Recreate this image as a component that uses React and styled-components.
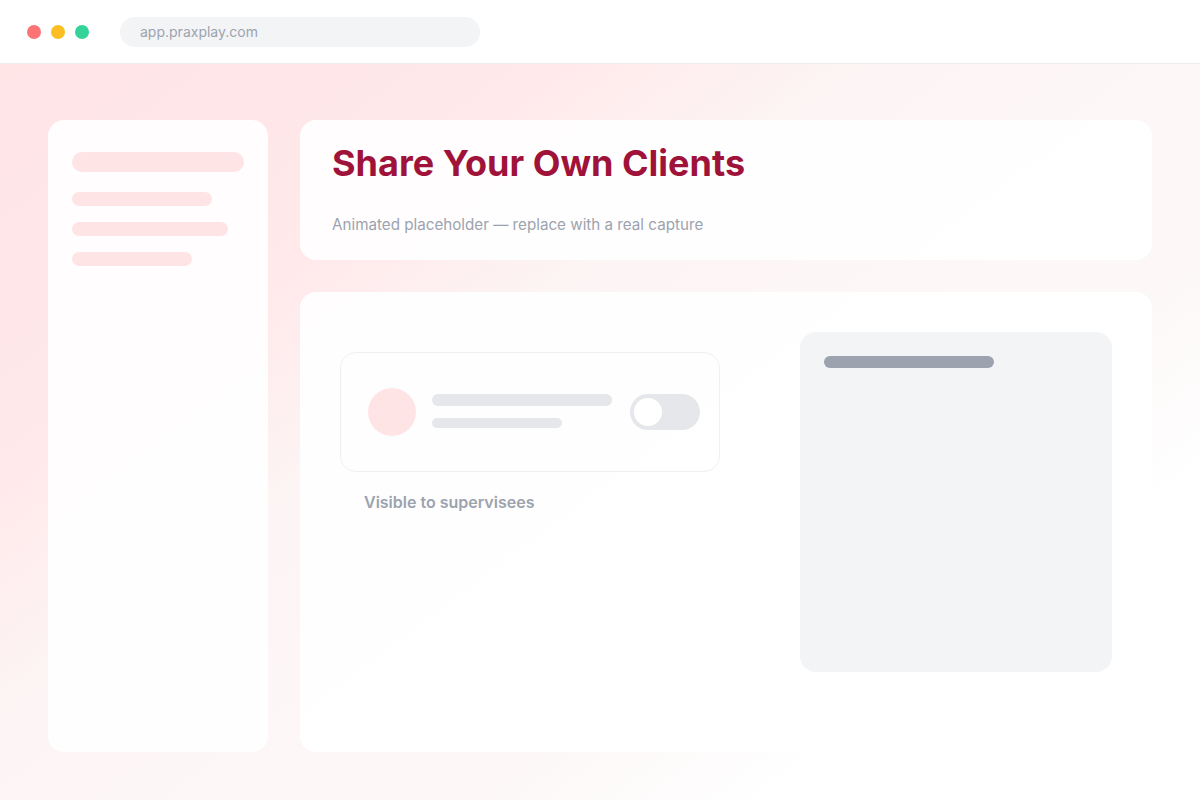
import React from 'react';
import styled, { createGlobalStyle } from 'styled-components';

const GlobalStyle = createGlobalStyle`
  html, body {
    margin: 0;
    padding: 0;
    width: 1200px;
    height: 800px;
    overflow: hidden;
    font-family: Inter, "Liberation Sans", sans-serif;
  }
`;

const sidebarBars = [
  { width: 172, height: 20 },
  { width: 140, height: 14 },
  { width: 156, height: 14 },
  { width: 120, height: 14 },
];

const App = () => {
  return (
    <Frame>
      <GlobalStyle />
      <TopBar>
        <Dots>
          <Dot color="#fb7373" />
          <Dot color="#fbbf24" />
          <Dot color="#34d399" />
        </Dots>
        <UrlBar>app.praxplay.com</UrlBar>
      </TopBar>
      <Stage>
        <Sidebar>
          {sidebarBars.map((bar, index) => (
            <SideBar key={index} w={bar.width} h={bar.height} first={index === 0} />
          ))}
        </Sidebar>
        <MainColumn>
          <HeaderCard>
            <Title>Share Your Own Clients</Title>
            <Subtitle>Animated placeholder — replace with a real capture</Subtitle>
          </HeaderCard>
          <MainCard>
            <LeftColumn>
              <ClientCard>
                <Avatar />
                <Lines>
                  <Line w={180} h={12} />
                  <Line w={130} h={10} />
                </Lines>
                <Toggle>
                  <Knob />
                </Toggle>
              </ClientCard>
              <Caption>Visible to supervisees</Caption>
            </LeftColumn>
            <Panel>
              <PanelBar />
            </Panel>
          </MainCard>
        </MainColumn>
      </Stage>
    </Frame>
  );
};

const Frame = styled.div`
  width: 1200px;
  height: 800px;
  display: flex;
  flex-direction: column;
  background: #ffffff;
`;

const TopBar = styled.div`
  height: 63px;
  border-bottom: 1px solid #ececee;
  background: #ffffff;
  display: flex;
  align-items: center;
  padding: 0 27px;
  gap: 31px;
  flex-shrink: 0;
`;

const Dots = styled.div`
  display: flex;
  gap: 10px;
`;

const Dot = styled.span`
  width: 14px;
  height: 14px;
  border-radius: 50%;
  background: ${(p) => p.color};
`;

const UrlBar = styled.div`
  width: 340px;
  height: 30px;
  border-radius: 15px;
  background: #f3f4f6;
  color: #9ca3af;
  font-size: 14px;
  line-height: 30px;
  padding-left: 20px;
`;

const Stage = styled.div`
  flex: 1;
  display: flex;
  gap: 32px;
  padding: 56px 48px 48px;
  background: linear-gradient(
    143deg,
    #ffe4e6 0%,
    #ffe9eb 26%,
    #fdf5f5 40%,
    #fdf8f8 68%,
    #ffffff 80%
  );
`;

const Sidebar = styled.div`
  width: 220px;
  box-sizing: border-box;
  padding: 32px 24px;
  background: rgba(255, 255, 255, 0.9);
  border-radius: 16px;
  display: flex;
  flex-direction: column;
  gap: 16px;
`;

const SideBar = styled.div`
  width: ${(p) => p.w}px;
  height: ${(p) => p.h}px;
  border-radius: ${(p) => p.h / 2}px;
  background: #ffe4e6;
  margin-bottom: ${(p) => (p.first ? '4px' : '0')};
`;

const MainColumn = styled.div`
  flex: 1;
  display: flex;
  flex-direction: column;
  gap: 32px;
`;

const HeaderCard = styled.div`
  height: 140px;
  box-sizing: border-box;
  padding: 22px 32px 0;
  background: rgba(255, 255, 255, 0.9);
  border-radius: 16px;
`;

const Title = styled.h1`
  margin: 0;
  font-size: 36px;
  font-weight: 700;
  line-height: 42px;
  color: #9f1239;
`;

const Subtitle = styled.p`
  margin: 31px 0 0;
  font-size: 15.2px;
  line-height: 20px;
  color: #9ca3af;
`;

const MainCard = styled.div`
  flex: 1;
  box-sizing: border-box;
  padding: 40px;
  background: rgba(255, 255, 255, 0.9);
  border-radius: 16px;
  display: grid;
  grid-template-columns: 380px 312px;
  justify-content: space-between;
  align-items: start;
`;

const LeftColumn = styled.div`
  padding-top: 20px;
  display: flex;
  flex-direction: column;
`;

const ClientCard = styled.div`
  height: 120px;
  box-sizing: border-box;
  border: 1px solid #eef0f2;
  border-radius: 16px;
  display: flex;
  align-items: center;
  padding: 0 19px 0 27px;
`;

const Avatar = styled.div`
  width: 48px;
  height: 48px;
  border-radius: 50%;
  background: #ffe4e6;
  flex-shrink: 0;
`;

const Lines = styled.div`
  display: flex;
  flex-direction: column;
  gap: 12px;
  margin-left: 16px;
  flex: 1;
  padding-bottom: 2px;
`;

const Line = styled.div`
  width: ${(p) => p.w}px;
  height: ${(p) => p.h}px;
  border-radius: ${(p) => p.h / 2}px;
  background: #e5e7eb;
`;

const Toggle = styled.div`
  width: 70px;
  height: 36px;
  border-radius: 18px;
  background: #e5e7eb;
  display: flex;
  align-items: center;
  padding: 0 4px;
  box-sizing: border-box;
  flex-shrink: 0;
`;

const Knob = styled.div`
  width: 28px;
  height: 28px;
  border-radius: 50%;
  background: #ffffff;
`;

const Caption = styled.div`
  margin: 20px 0 0 24px;
  font-size: 16px;
  font-weight: 600;
  line-height: 20px;
  color: #9ca3af;
`;

const Panel = styled.div`
  height: 340px;
  box-sizing: border-box;
  padding: 24px;
  background: #f3f4f6;
  border-radius: 16px;
`;

const PanelBar = styled.div`
  width: 170px;
  height: 12px;
  border-radius: 6px;
  background: #9ca3af;
`;

export default App;
